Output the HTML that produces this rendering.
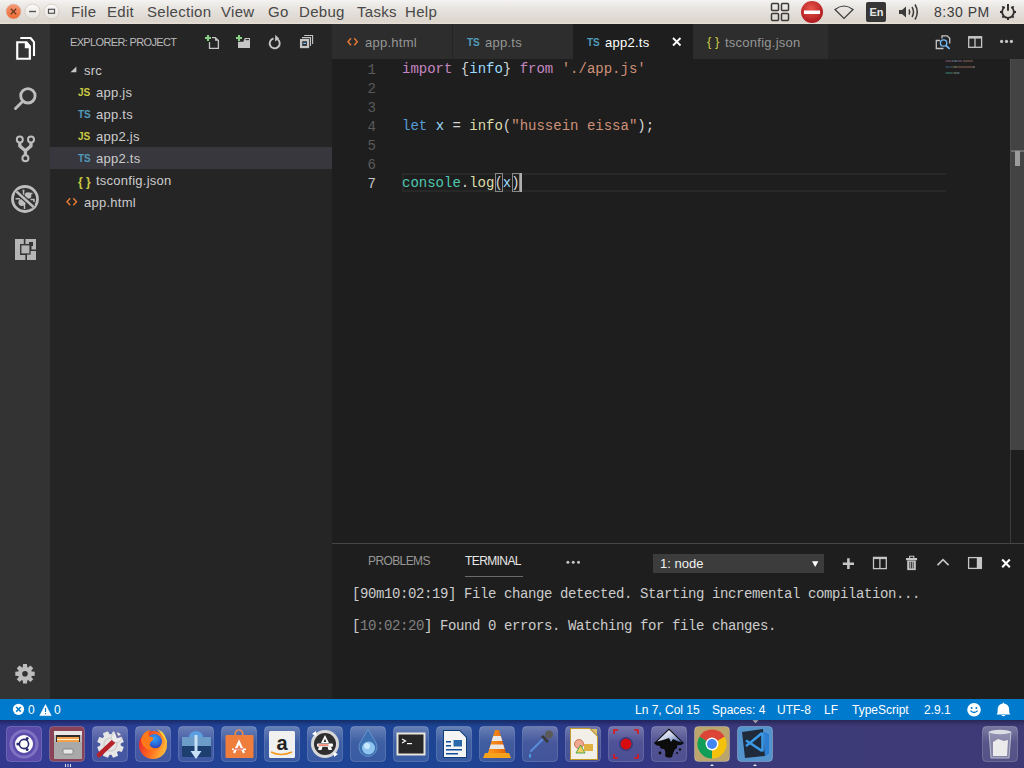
<!DOCTYPE html>
<html><head><meta charset="utf-8">
<style>
*{margin:0;padding:0;box-sizing:border-box}
html,body{width:1024px;height:768px;overflow:hidden;background:#1e1e1e;font-family:"Liberation Sans",sans-serif}
.abs{position:absolute}
#topbar{position:absolute;left:0;top:0;width:1024px;height:24px;background:linear-gradient(#f4f3f1 0px,#e6e2dd 10px,#dbd5cd 22px,#e6ded4 23px)}
.menu{position:absolute;top:3px;font-size:15px;letter-spacing:0.3px;color:#484848;white-space:nowrap}
#activity{position:absolute;left:0;top:24px;width:50px;height:675px;background:#333333}
#sidebar{position:absolute;left:50px;top:24px;width:282px;height:675px;background:#252526}
#tabs{position:absolute;left:332px;top:24px;width:692px;height:35px;background:#252526}
.tab{position:absolute;top:0;height:35px;background:#2d2d2d;font-size:13px;color:#8e8e8e}
#editor{position:absolute;left:332px;top:59px;width:692px;height:484px;background:#1e1e1e}
#panel{position:absolute;left:332px;top:543px;width:692px;height:156px;background:#1e1e1e;border-top:1px solid #454545}
#status{position:absolute;left:0;top:699px;width:1024px;height:21px;background:#007acc;color:#fff;font-size:12px}
#dock{position:absolute;left:0;top:720px;width:1024px;height:48px;background:#3a3770}
.mono{font-family:"Liberation Mono",monospace}
.row{position:absolute;left:0;width:282px;height:22px}
.row.sel{background:#37373d}
.fname{position:absolute;top:4px;font-size:13px;letter-spacing:0.25px;color:#cccccc;white-space:nowrap}
.ico{position:absolute;top:6px;font-size:10px;font-weight:bold;white-space:nowrap}
.js{color:#cbcb41}.ts{color:#519aba}.br{color:#cbcb41;font-weight:bold;font-size:12px;letter-spacing:0}
.tab.act{background:#1e1e1e}
.tlabel{position:absolute;top:11px;font-size:13px;letter-spacing:0.25px;color:#969696;white-space:nowrap}
.act .tlabel{color:#ffffff}
.tico{position:absolute;top:13px;font-size:10px;font-weight:bold;white-space:nowrap}
.lnums{position:absolute;left:0;top:2px;width:44px;text-align:right;font-size:14px;line-height:19px;color:#5a5a5a}
.code{position:absolute;left:70px;top:1px;font-size:14px;line-height:19px;color:#d4d4d4;white-space:pre}
.kw{color:#c586c0}.vr{color:#9cdcfe}.st{color:#ce9178}.ty{color:#569cd6}.fn{color:#dcdcaa}.cl{color:#4ec9b0}
.ptab{position:absolute;top:10px;font-size:12px;letter-spacing:-0.6px;white-space:nowrap}
.term{position:absolute;left:20px;font-size:14px;letter-spacing:-0.4px;line-height:16px;color:#cccccc;white-space:pre}
.sb{position:absolute;top:4px;font-size:12px;color:#ffffff;white-space:nowrap}
</style></head><body>
<div id="topbar">
  <svg class="abs" style="left:0;top:0" width="64" height="24">
    <defs>
      <linearGradient id="cg" x1="0" y1="0" x2="0" y2="1"><stop offset="0" stop-color="#f49a78"/><stop offset="1" stop-color="#ee6a33"/></linearGradient>
      <linearGradient id="wg" x1="0" y1="0" x2="0" y2="1"><stop offset="0" stop-color="#fbfaf9"/><stop offset="1" stop-color="#e6e3de"/></linearGradient>
    </defs>
    <circle cx="13.5" cy="11.5" r="7.5" fill="url(#cg)" stroke="#d9c3b5" stroke-width="0.6"/>
    <path d="M10.8 8.8 L16.2 14.2 M16.2 8.8 L10.8 14.2" stroke="#6b3a22" stroke-width="1.3"/>
    <circle cx="32.5" cy="11.5" r="7.5" fill="url(#wg)" stroke="#cfc6bb" stroke-width="0.8"/>
    <path d="M29 11.5 H36" stroke="#555" stroke-width="1.4"/>
    <circle cx="51.5" cy="11.5" r="7.5" fill="url(#wg)" stroke="#cfc6bb" stroke-width="0.8"/>
    <rect x="48.5" y="9.3" width="6" height="4" fill="none" stroke="#555" stroke-width="1.2"/>
  </svg>
  <span class="menu" style="left:71px">File</span>
  <span class="menu" style="left:107px">Edit</span>
  <span class="menu" style="left:147px">Selection</span>
  <span class="menu" style="left:221px">View</span>
  <span class="menu" style="left:268px">Go</span>
  <span class="menu" style="left:299px">Debug</span>
  <span class="menu" style="left:357px">Tasks</span>
  <span class="menu" style="left:405px">Help</span>
  <svg class="abs" style="left:764px;top:0" width="260" height="24">
    <g fill="none" stroke="#3c3c3c" stroke-width="1.5">
      <rect x="7.5" y="3.5" width="7" height="7" rx="1"/><rect x="17.5" y="3.5" width="7" height="7" rx="1"/>
      <rect x="7.5" y="13.5" width="7" height="7" rx="1"/><rect x="17.5" y="13.5" width="7" height="7" rx="1"/>
    </g>
    <defs><radialGradient id="rg" cx="0.45" cy="0.35" r="0.7"><stop offset="0" stop-color="#e8564a"/><stop offset="1" stop-color="#a8141a"/></radialGradient></defs>
    <circle cx="48" cy="12" r="11" fill="url(#rg)"/>
    <rect x="40" y="10.5" width="16" height="3.5" fill="#fff"/>
    <path d="M71 9.5 Q80 2.5 89 9.5 L80 18.5 Z" fill="none" stroke="#3a3a3a" stroke-width="1.2"/>
    <rect x="102" y="2" width="20" height="20" rx="2" fill="#363636"/>
    <text x="105.5" y="15.8" font-family="Liberation Sans" font-weight="bold" font-size="11" fill="#e6e6e6">En</text>
    <path d="M135 10 H138 L142 6.5 V17.5 L138 14 H135 Z" fill="#3a3a3a"/>
    <path d="M145 9.5 Q146.5 12 145 14.5 M148 7 Q151 12 148 17 M151 4.5 Q155.5 12 151 19.5" fill="none" stroke="#3a3a3a" stroke-width="1.5"/>
  </svg>
  <span class="menu" style="left:934px;font-size:14px;top:4px;letter-spacing:0.5px;color:#3c3c3c">8:30 PM</span>
  <svg class="abs" style="left:996px;top:0" width="28" height="24">
    <path d="M8.70 7.10 A5.9 5.9 0 1 0 15.30 7.10" fill="none" stroke="#2e2e2e" stroke-width="1.8"/>
    <path d="M17.50 12.00 L20.00 12.00 M15.89 15.89 L17.66 17.66 M12.00 17.50 L12.00 20.00 M8.11 15.89 L6.34 17.66 M6.50 12.00 L4.00 12.00 M8.11 8.11 L6.34 6.34 M15.89 8.11 L17.66 6.34" stroke="#2e2e2e" stroke-width="1.9"/>
    <path d="M12 4 V10.7" stroke="#2e2e2e" stroke-width="1.9"/>
  </svg>
</div>
<div id="activity">
<svg class="abs" style="left:0;top:-24px" width="50" height="700">
  <path d="M20.3 38 H30.6 L34 42.2 V56" fill="none" stroke="#ffffff" stroke-width="2.1" stroke-linejoin="round"/>
  <path d="M15.6 40.6 H27.2 L31.5 45.6 V60.4 H15.6 Z" fill="#ffffff" stroke="#333333" stroke-width="1.1" stroke-linejoin="round"/>
  <path d="M18.3 43.3 H24.8 V48.3 H28.7 V57.7 H18.3 Z" fill="#333333"/>
  <g fill="none" stroke="#bdbdbd" stroke-width="2.9" stroke-linecap="round">
    <circle cx="27.9" cy="95.8" r="7.2"/>
    <path d="M15.5 108.5 L22.3 101.7"/>
  </g>
  <g fill="none" stroke="#bdbdbd" stroke-width="2">
    <circle cx="19.8" cy="139.5" r="3"/>
    <circle cx="31" cy="139.5" r="3"/>
    <circle cx="25.4" cy="158.2" r="3"/>
  </g>
  <path d="M19.8 142.5 V146 L25.4 150.8 L31 146 V142.5 M25.4 150.8 V155.2" fill="none" stroke="#bdbdbd" stroke-width="3.3" stroke-linejoin="round"/>
  <circle cx="25" cy="199" r="12.5" stroke-width="2.8" fill="none" stroke="#bdbdbd"/>
  <g fill="#bdbdbd">
    <ellipse cx="22" cy="202.5" rx="3.6" ry="3.4"/>
    <ellipse cx="28" cy="195.5" rx="3.4" ry="3.2"/>
  </g>
  <g fill="none" stroke="#bdbdbd" stroke-width="1.5">
    <path d="M15.5 198.8 H20 M24.5 202 V209 M23.5 190 V195 M22.5 190.5 H24.5 M29.5 193.5 L32.5 193.5 M30.5 199.5 H34 V202"/>
  </g>
  <path d="M16.4 191.5 L33.6 207" stroke="#333" stroke-width="5"/>
  <path d="M16.4 191.5 L33.6 207" stroke="#bdbdbd" stroke-width="2.4"/>
  <g fill="#b5b5b5">
    <path d="M15 239 H23.8 V244 H20 V255 H25.4 V260 H15 Z"/>
    <path d="M25.4 239 H36 V249.5 H31.5 V246 H33 V242 H29 V244 H25.4 Z"/>
    <rect x="27" y="251" width="9" height="9"/>
  </g>
  <rect x="20.8" y="244.8" width="9.2" height="9.2" fill="#b5b5b5" stroke="#333" stroke-width="1.2"/>
  <path d="M31.63 671.54 L34.70 671.81 L34.70 675.79 L31.63 676.06 L31.28 676.89 L33.26 679.25 L30.45 682.06 L28.09 680.08 L27.26 680.43 L26.99 683.50 L23.01 683.50 L22.74 680.43 L21.91 680.08 L19.55 682.06 L16.74 679.25 L18.72 676.89 L18.37 676.06 L15.30 675.79 L15.30 671.81 L18.37 671.54 L18.72 670.71 L16.74 668.35 L19.55 665.54 L21.91 667.52 L22.74 667.17 L23.01 664.10 L26.99 664.10 L27.26 667.17 L28.09 667.52 L30.45 665.54 L33.26 668.35 L31.28 670.71 Z M27.80 673.80 a2.8 2.8 0 1 0 -5.6 0 a2.8 2.8 0 1 0 5.6 0 Z" fill="#bdbdbd" fill-rule="evenodd"/>
</svg>
</div>
<div id="sidebar">
  <div class="abs" style="left:20px;top:12px;font-size:11px;letter-spacing:-0.65px;color:#bbbbbb;white-space:nowrap" id="exphdr">EXPLORER: PROJECT</div>
  <svg class="abs" style="left:0;top:0" width="282" height="35">
    <g transform="translate(-50,-24)">
      <path d="M209.5 42 V48.3 H218.4 V40.6 L215.3 37.6 H212" fill="none" stroke="#c5c5c5" stroke-width="1.3"/>
      <path d="M215 37.6 V40.8 H218.6 Z" fill="#c5c5c5"/>
      <path d="M205 38 H211 M208 35 V41" stroke="#89d185" stroke-width="2.1"/>
      <path d="M238 41.8 H243.3 L244.8 37.9 H250 V48 H238 Z" fill="#c5c5c5"/>
      <path d="M245.6 39.6 H249" stroke="#252526" stroke-width="1.1"/>
      <path d="M236 38 H242 M239 35 V41" stroke="#89d185" stroke-width="2.1"/>
      <path d="M277.5 39.2 A5 5 0 1 1 273.5 38.5" fill="none" stroke="#c5c5c5" stroke-width="1.9"/>
      <path d="M275.3 34.8 L279.2 38.6 L275 41.6 Z" fill="#c5c5c5"/>
      <rect x="301.1" y="40.1" width="6.9" height="6.9" fill="none" stroke="#c5c5c5" stroke-width="2.3"/>
      <path d="M303.2 43.4 H306" stroke="#75beff" stroke-width="1.3"/>
      <path d="M302 37.6 H310.5 V46" fill="none" stroke="#c5c5c5" stroke-width="1.1"/>
      <path d="M304.2 35.5 H312.6 V43.9" fill="none" stroke="#c5c5c5" stroke-width="1.1"/>
    </g>
  </svg>
  <div class="row" style="top:35px"><svg class="abs" style="left:20px;top:7px" width="8" height="8"><path d="M6.4 0.4 V6.3 H0.5 Z" fill="#c5c5c5"/></svg><span class="fname" style="left:34px">src</span></div>
  <div class="row" style="top:57px"><span class="ico js" style="left:28px">JS</span><span class="fname" style="left:46px">app.js</span></div>
  <div class="row" style="top:79px"><span class="ico ts" style="left:28px">TS</span><span class="fname" style="left:46px">app.ts</span></div>
  <div class="row" style="top:101px"><span class="ico js" style="left:28px">JS</span><span class="fname" style="left:46px">app2.js</span></div>
  <div class="row sel" style="top:123px"><span class="ico ts" style="left:28px">TS</span><span class="fname" style="left:46px">app2.ts</span></div>
  <div class="row" style="top:145px"><span class="ico br" style="left:28px">{ }</span><span class="fname" style="left:46px">tsconfig.json</span></div>
  <div class="row" style="top:167px"><svg class="abs" style="left:16px;top:6px" width="12" height="10"><path d="M4.2 1.2 L1 4.7 L4.2 8.2 M7.3 1.2 L10.5 4.7 L7.3 8.2" fill="none" stroke="#e37933" stroke-width="1.5"/></svg><span class="fname" style="left:34px">app.html</span></div>
</div>
<div id="tabs">
  <div class="tab" style="left:0;width:120px"><svg class="abs" style="left:15px;top:13px" width="12" height="10"><path d="M4 1.2 L1 4.7 L4 8.2 M7.3 1.2 L10.3 4.7 L7.3 8.2" fill="none" stroke="#e37933" stroke-width="1.5"/></svg><span class="tlabel" style="left:33px">app.html</span></div>
  <div class="tab" style="left:121px;width:120px"><span class="tico ts" style="left:14px">TS</span><span class="tlabel" style="left:32px">app.ts</span></div>
  <div class="tab act" style="left:241px;width:120px"><span class="tico ts" style="left:14px">TS</span><span class="tlabel" style="left:32px">app2.ts</span>
    <svg class="abs" style="left:99px;top:13px" width="10" height="10"><path d="M1 1 L8.5 8.5 M8.5 1 L1 8.5" stroke="#ffffff" stroke-width="1.8"/></svg></div>
  <div class="tab" style="left:361px;width:135px"><span class="tico br" style="left:14px;top:10px;font-size:13px;font-weight:normal">{ }</span><span class="tlabel" style="left:32px">tsconfig.json</span></div>
  <svg class="abs" style="left:0;top:0" width="692" height="35">
    <g transform="translate(-332,-24)">
      <path d="M942 38.5 V35.8 H947.2 L949.7 38.3 V43.6" fill="none" stroke="#c5c5c5" stroke-width="1.3"/>
      <path d="M940 40.5 H936.3 V48.5 H943.5" fill="none" stroke="#c5c5c5" stroke-width="1.3"/>
      <circle cx="943.6" cy="43" r="3.2" fill="none" stroke="#75beff" stroke-width="1.3"/>
      <path d="M945.8 45.3 L949.6 48.9" stroke="#75beff" stroke-width="1.6"/>
      <rect x="968.7" y="36.7" width="12.9" height="10.6" fill="none" stroke="#c5c5c5" stroke-width="1.3"/>
      <path d="M968.7 37.8 H981.6" stroke="#c5c5c5" stroke-width="1.6"/>
      <path d="M975 37 V47.3" stroke="#c5c5c5" stroke-width="1.3"/>
      <circle cx="1001.6" cy="41.4" r="1.6" fill="#c5c5c5"/><circle cx="1006.5" cy="41.4" r="1.6" fill="#c5c5c5"/><circle cx="1011.4" cy="41.4" r="1.6" fill="#c5c5c5"/>
    </g>
  </svg>
</div>
<div id="editor">
  <div class="abs" style="left:70px;top:114px;width:544px;height:19px;border:2px solid #282828;border-right:none"></div>
  <div class="abs" style="left:163px;top:114.4px;width:8.4px;height:18.4px;border:1px solid #888888"></div>
  <div class="abs" style="left:180px;top:114.4px;width:8.4px;height:18.4px;border:1px solid #888888"></div>
  <div class="abs" style="left:187.5px;top:114px;width:2px;height:19px;background:#aeafad"></div>
  <div class="lnums mono">
    <div>1</div><div>2</div><div>3</div><div>4</div><div>5</div><div>6</div><div style="color:#c6c6c6">7</div>
  </div>
  <div class="code mono"><div><span class="kw">import</span> {<span class="vr">info</span>} <span class="kw">from</span> <span class="st">'./app.js'</span></div><div>&nbsp;</div><div>&nbsp;</div><div><span class="ty">let</span> <span class="vr">x</span> = <span class="fn">info</span>(<span class="st">"hussein eissa"</span>);</div><div>&nbsp;</div><div>&nbsp;</div><div><span class="cl">console</span>.<span class="fn">log</span>(<span class="vr">x</span>)</div></div>
  <svg class="abs" style="left:0;top:0" width="692" height="484">
    <g transform="translate(-332,-59)">
      <rect x="1010" y="59" width="1" height="484" fill="#3c3c3c"/><rect x="1010" y="59" width="1" height="391" fill="#4c4c4c"/>
      <rect x="1011" y="59" width="13" height="391" fill="#434343"/>
      <rect x="1011" y="150.5" width="13" height="1" fill="#9a9a9a"/>
      <rect x="1015" y="151" width="5" height="15" fill="#9b9b9b"/>
    </g>
  </svg>
  <svg class="abs" style="left:613px;top:0" width="64" height="20">
    <g transform="translate(-945,-59)" opacity="0.3">
      <rect x="945.6" y="60" width="6" height="2" fill="#c586c0"/>
      <rect x="952" y="60" width="1" height="2" fill="#d4d4d4"/>
      <rect x="953.5" y="60" width="4" height="2" fill="#9cdcfe"/>
      <rect x="958" y="60" width="4" height="2" fill="#c586c0"/>
      <rect x="963" y="60" width="10" height="2" fill="#ce9178"/>
      <rect x="945.6" y="66" width="3" height="2" fill="#569cd6"/>
      <rect x="949.5" y="66" width="1" height="2" fill="#9cdcfe"/>
      <rect x="951.5" y="66" width="1" height="2" fill="#d4d4d4"/>
      <rect x="953.5" y="66" width="4" height="2" fill="#dcdcaa"/>
      <rect x="958" y="66" width="15" height="2" fill="#ce9178"/>
      <rect x="973" y="66" width="2" height="2" fill="#d4d4d4"/>
      <rect x="945.6" y="72" width="7" height="2" fill="#4ec9b0"/>
      <rect x="953.5" y="72" width="3" height="2" fill="#dcdcaa"/>
      <rect x="956.5" y="72" width="3" height="2" fill="#9cdcfe"/>
    </g>
  </svg>
</div>
<div id="panel">
  <span class="ptab" style="left:36px;color:#969696">PROBLEMS</span>
  <span class="ptab" style="left:133px;color:#e7e7e7">TERMINAL</span>
  <div class="abs" style="left:133px;top:32px;width:58px;height:1px;background:#6b6b6b"></div>
  <div class="abs" style="left:321px;top:10px;width:171px;height:19px;background:#3c3c3c"></div>
  <span class="abs" style="left:328px;top:12px;font-size:13px;color:#f0f0f0;white-space:nowrap">1: node</span>
  <svg class="abs" style="left:0;top:0" width="692" height="40">
    <g transform="translate(-332,-543)">
      <circle cx="567.9" cy="561.3" r="1.5" fill="#c5c5c5"/><circle cx="573.2" cy="561.3" r="1.5" fill="#c5c5c5"/><circle cx="578.5" cy="561.3" r="1.5" fill="#c5c5c5"/>
      <path d="M812 560.2 H818.4 L815.2 566 Z" fill="#ffffff"/>
      <path d="M842.8 562.7 H854 M848.4 557.2 V568" stroke="#c5c5c5" stroke-width="2.6"/>
      <rect x="873.5" y="556.4" width="12.8" height="11.2" fill="none" stroke="#c5c5c5" stroke-width="1.3"/>
      <path d="M873.5 557.3 H886.3" stroke="#c5c5c5" stroke-width="1.6"/>
      <path d="M879.9 556.5 V567.6" stroke="#c5c5c5" stroke-width="1.3"/>
      <path d="M909.6 557 V555.3 H913.8 V557" fill="none" stroke="#c5c5c5" stroke-width="1.1"/>
      <rect x="906" y="557" width="11.1" height="2.2" fill="#c5c5c5"/>
      <rect x="907.2" y="559.5" width="8.6" height="9.6" fill="#c5c5c5"/>
      <path d="M909.8 560.8 V567.5 M911.5 560.8 V567.5 M913.2 560.8 V567.5" stroke="#1e1e1e" stroke-width="0.8"/>
      <path d="M937.5 564.2 L943 558.7 L948.6 564.2" fill="none" stroke="#c5c5c5" stroke-width="1.7"/>
      <rect x="968.6" y="556.6" width="12.8" height="10.8" fill="none" stroke="#c5c5c5" stroke-width="1.3"/>
      <rect x="976.8" y="556.6" width="4.6" height="10.8" fill="#c5c5c5"/>
      <path d="M1002.2 558.6 L1009.8 566.2 M1009.8 558.6 L1002.2 566.2" stroke="#ffffff" stroke-width="2.1"/>
    </g>
  </svg>
  <div class="term mono" style="top:42px"><span>[90m10:02:19] File change detected. Starting incremental compilation...</span></div>
  <div class="term mono" style="top:74px"><span>[<span style="color:#808080">10:02:20</span>] Found 0 errors. Watching for file changes.</span></div>
</div>
<div id="status">
  <svg class="abs" style="left:0;top:0" width="70" height="21">
    <circle cx="18.5" cy="10.3" r="5.6" fill="#ffffff"/>
    <path d="M16.2 8 L20.8 12.6 M20.8 8 L16.2 12.6" stroke="#007acc" stroke-width="1.5"/>
    <path d="M45.5 5.6 L51.2 16.6 H39.8 Z" fill="#ffffff" stroke="#ffffff" stroke-width="0.6" stroke-linejoin="round"/>
    <path d="M45.5 9 V13" stroke="#007acc" stroke-width="1.2"/>
    <circle cx="45.5" cy="14.6" r="0.7" fill="#007acc"/>
  </svg>
  <span class="sb" style="left:28px">0</span>
  <span class="sb" style="left:54px">0</span>
  <span class="sb" style="left:635px">Ln 7, Col 15</span>
  <span class="sb" style="left:712px">Spaces: 4</span>
  <span class="sb" style="left:777px">UTF-8</span>
  <span class="sb" style="left:824px">LF</span>
  <span class="sb" style="left:852px">TypeScript</span>
  <span class="sb" style="left:924px">2.9.1</span>
  <svg class="abs" style="left:960px;top:0" width="64" height="21">
    <circle cx="14" cy="10.8" r="6.8" fill="#ffffff"/>
    <circle cx="11.6" cy="8.9" r="1" fill="#007acc"/><circle cx="16.4" cy="8.9" r="1" fill="#007acc"/>
    <path d="M10.4 11.6 Q14 15.4 17.6 11.6" fill="none" stroke="#007acc" stroke-width="1.3"/>
    <path d="M42.8 4.6 Q42.8 3.4 43.4 3.4 Q44 3.4 44 4.6 Q49.2 5.6 49.2 11 V13.6 L50.2 15.4 H36.6 L37.6 13.6 V11 Q37.6 5.6 42.8 4.6 Z" fill="#ffffff"/>
    <path d="M41.3 16 Q43.4 18.6 45.5 16 Z" fill="#ffffff"/>
  </svg>
</div>
<div id="dock"><svg class="abs" style="left:0;top:0" width="1024" height="48"><defs>
 <linearGradient id="dockbg" x1="0" y1="0" x2="1" y2="0"><stop offset="0" stop-color="#32388e"/><stop offset="0.12" stop-color="#2a3e94"/><stop offset="0.25" stop-color="#1f4496"/><stop offset="0.45" stop-color="#1d4594"/><stop offset="0.6" stop-color="#323686"/><stop offset="0.75" stop-color="#3c3a78"/><stop offset="1" stop-color="#3d3a76"/></linearGradient>
 <linearGradient id="docktop" x1="0" y1="0" x2="0" y2="1"><stop offset="0" stop-color="rgba(0,0,20,0.35)"/><stop offset="1" stop-color="rgba(0,0,20,0)"/></linearGradient>
 <linearGradient id="tg" x1="0" y1="0" x2="0" y2="1"><stop offset="0" stop-color="rgba(255,255,255,0.32)"/><stop offset="0.45" stop-color="rgba(255,255,255,0.14)"/><stop offset="1" stop-color="rgba(255,255,255,0.12)"/></linearGradient>
 <linearGradient id="tgb" x1="0" y1="0" x2="0" y2="1"><stop offset="0" stop-color="rgba(255,255,255,0.32)"/><stop offset="0.45" stop-color="rgba(255,255,255,0.14)"/><stop offset="1" stop-color="rgba(255,255,255,0.12)"/></linearGradient>
 <radialGradient id="ffg" cx="0.5" cy="0.3" r="0.7"><stop offset="0" stop-color="#36a0f0"/><stop offset="0.6" stop-color="#2a6ad8"/><stop offset="1" stop-color="#3a3aa8"/></radialGradient>
 <linearGradient id="fox" x1="0" y1="0.3" x2="1" y2="0.7"><stop offset="0" stop-color="#e8262e"/><stop offset="0.5" stop-color="#ff6a1e"/><stop offset="1" stop-color="#ffc23b"/></linearGradient>
 <linearGradient id="coneg" x1="0" y1="0" x2="1" y2="0"><stop offset="0" stop-color="#ff9a1e"/><stop offset="1" stop-color="#e2650a"/></linearGradient>
</defs>
<rect x="0" y="0" width="1024" height="48" fill="url(#dockbg)"/><rect x="0" y="0" width="1024" height="6" fill="url(#docktop)"/>
<rect x="6.5" y="6.5" width="35" height="35" rx="4" fill="#5a4aaa" stroke="rgba(255,255,255,0.2)"/>
<circle cx="24" cy="24" r="13" fill="none" stroke="rgba(200,190,240,0.35)" stroke-width="3"/>
<circle cx="24" cy="24" r="9" fill="#ffffff"/>
<circle cx="24" cy="24" r="4.6" fill="none" stroke="#2a2a6e" stroke-width="1.6"/>
<circle cx="17.8" cy="24" r="1.5" fill="#2a2a6e"/><circle cx="27.1" cy="18.6" r="1.5" fill="#2a2a6e"/><circle cx="27.1" cy="29.4" r="1.5" fill="#2a2a6e"/>
<rect x="49.5" y="6.5" width="35" height="35" rx="4" fill="#8a4256" stroke="rgba(255,255,255,0.2)"/>
<rect x="54" y="11" width="28" height="28" rx="1.5" fill="#b9b9b9"/>
<rect x="54" y="11" width="28" height="4" fill="#e6e6e6"/>
<rect x="56" y="15" width="24" height="7" fill="#2a2a2a"/>
<rect x="57" y="17" width="22" height="5" fill="#f2a04a"/><rect x="57" y="19" width="22" height="1" fill="#fff4d0"/>
<rect x="54" y="22" width="28" height="17" fill="#a9a9a9"/>
<rect x="63" y="29" width="10" height="5" rx="1" fill="#e8e8e8" stroke="#777" stroke-width="0.8"/>
<rect x="65" y="44" width="1" height="3" fill="#e0e0e0"/><rect x="67.5" y="44" width="1" height="3" fill="#e0e0e0"/><rect x="70" y="44" width="1" height="3" fill="#e0e0e0"/>
<rect x="92.5" y="6.5" width="35" height="35" rx="4" fill="url(#tg)" stroke="rgba(255,255,255,0.18)" stroke-width="1"/>
<path d="M120.7 25.4 L123.8 27.1 L121.8 32.1 L118.3 31.0 L117.0 32.3 L118.1 35.8 L113.1 37.8 L111.4 34.7 L109.6 34.7 L107.9 37.8 L102.9 35.8 L104.0 32.3 L102.7 31.0 L99.2 32.1 L97.2 27.1 L100.3 25.4 L100.3 23.6 L97.2 21.9 L99.2 16.9 L102.7 18.0 L104.0 16.7 L102.9 13.2 L107.9 11.2 L109.6 14.3 L111.4 14.3 L113.1 11.2 L118.1 13.2 L117.0 16.7 L118.3 18.0 L121.8 16.9 L123.8 21.9 L120.7 23.6 Z" fill="#e6e6e6"/><circle cx="110.5" cy="24.5" r="6.5" fill="none" stroke="#cfcfcf" stroke-width="1.5"/><path d="M99 35.0 L113 22.0" stroke="#b8222a" stroke-width="4.6" stroke-linecap="round"/><circle cx="116.5" cy="17.5" r="5" fill="#ececec" stroke="#bdbdbd" stroke-width="0.6"/><path d="M115.5 11.5 L117.5 17.0 L122.5 15.5" fill="none" stroke="#6a6aa8" stroke-width="2"/><rect x="135.5" y="6.5" width="35" height="35" rx="4" fill="url(#tg)" stroke="rgba(255,255,255,0.18)" stroke-width="1"/>
<circle cx="153" cy="25" r="14" fill="url(#fox)"/><circle cx="154.5" cy="21.5" r="7.5" fill="url(#ffg)"/><path d="M141 20 Q143 11 150 10 Q147 14 150 17 Q154 16 153 20 Q149 22 150 26 Q154 30 160 27 Q155 33 147 29 Q141 25 141 20 Z" fill="#ff7a1a"/><path d="M157 9 Q167 13 167 25 Q165 17 157 9 Z" fill="#ffd63b"/><rect x="178.5" y="6.5" width="35" height="35" rx="4" fill="url(#tg)" stroke="rgba(255,255,255,0.18)" stroke-width="1"/>
<ellipse cx="196" cy="17" rx="7" ry="6" fill="#5aa0e0"/>
<rect x="182" y="17" width="29" height="9" fill="#6c9cc8"/>
<rect x="182" y="26" width="29" height="11" fill="#1d3f70"/>
<path d="M194.5 15 H197.5 V31 L201.5 31 L196 39 L190.5 31 H194.5 Z" fill="#c8e0f6"/>
<rect x="221.5" y="6.5" width="35" height="35" rx="4" fill="url(#tgb)" stroke="rgba(255,255,255,0.18)" stroke-width="1"/>
<path d="M235 16 Q235 10 239 10 Q243 10 243 16" fill="none" stroke="#f08a4a" stroke-width="1.6"/>
<rect x="225.5" y="15" width="28" height="23" rx="1" fill="#ef7d3c"/>
<path d="M234 33 L239 22 L244 33" fill="none" stroke="#ffffff" stroke-width="2.2"/>
<rect x="232" y="28.5" width="14" height="1.6" fill="#ffffff"/><rect x="234" y="28.5" width="9" height="1" fill="#e03020"/>
<rect x="264.5" y="6.5" width="35" height="35" rx="4" fill="url(#tgb)" stroke="rgba(255,255,255,0.18)" stroke-width="1"/>
<rect x="269" y="11" width="26" height="27" rx="1.5" fill="#f0f0f0"/>
<text x="282" y="30" text-anchor="middle" font-family="Liberation Sans" font-weight="bold" font-size="20" fill="#222">a</text>
<path d="M271 32 Q281 37 292 32" fill="none" stroke="#f29b1d" stroke-width="1.6"/>
<rect x="307.5" y="6.5" width="35" height="35" rx="4" fill="url(#tgb)" stroke="rgba(255,255,255,0.18)" stroke-width="1"/>
<circle cx="325" cy="24" r="14" fill="#d8d8d8"/>
<circle cx="325" cy="24" r="11" fill="#2e2e2e"/>
<g transform="translate(0,2.5)"><path d="M325 12.5 L321 20.5 H329 Z" fill="#ffffff"/><path d="M325 16 L323.6 19.5 H326.4 Z" fill="#2e2e2e"/><rect x="317" y="21" width="16" height="3.2" rx="1" fill="#ffffff"/><rect x="318.5" y="22" width="10" height="1.1" fill="#e84020"/><path d="M319 24 H322.5 L321.5 27.5 H318 Z M327.5 24 H331 L332 27.5 H328.5 Z" fill="#ffffff"/></g><path d="M312 14 L316 11 L316.5 16 Z M338 34 L334 37 L333.5 32 Z" fill="#ffffff"/><rect x="350.5" y="6.5" width="35" height="35" rx="4" fill="url(#tgb)" stroke="rgba(255,255,255,0.18)" stroke-width="1"/>
<path d="M368 9 Q371 15 375 21 Q379 27 375 33 Q368 40 361 33 Q357 27 361 21 Q365 15 368 9 Z" fill="#3d70b0" stroke="#6e9ad0" stroke-width="0.8"/>
<ellipse cx="368.5" cy="28" rx="6.5" ry="6.5" fill="#8ec4ee"/>
<ellipse cx="367" cy="26" rx="3" ry="3" fill="#c8e8ff"/>
<rect x="393.5" y="6.5" width="35" height="35" rx="4" fill="url(#tgb)" stroke="rgba(255,255,255,0.18)" stroke-width="1"/>
<rect x="396.5" y="12.5" width="29" height="23" fill="#e8e4dc"/>
<rect x="398.5" y="14.5" width="25" height="19" fill="#262626"/>
<path d="M402 19 L405.5 21 L402 23" fill="none" stroke="#ffffff" stroke-width="1.2"/><rect x="407" y="23" width="5" height="1.2" fill="#fff"/>
<rect x="436.5" y="6.5" width="35" height="35" rx="4" fill="url(#tgb)" stroke="rgba(255,255,255,0.18)" stroke-width="1"/>
<path d="M443 10 H460 L467 17 V38 H443 Z" fill="#0f3f7a"/>
<path d="M444 11 H459.5 L466 17.5 V37 H444 Z" fill="#f4f4f4"/>
<rect x="446" y="21" width="5" height="1.5" fill="#0f4f9a"/><rect x="446" y="25" width="5" height="1.5" fill="#0f4f9a"/><rect x="446" y="29" width="16" height="1.5" fill="#0f4f9a"/><rect x="446" y="33" width="12" height="1.5" fill="#0f4f9a"/>
<rect x="453.5" y="20" width="8.5" height="6.5" fill="#2a6aaa"/>
<rect x="479.5" y="6.5" width="35" height="35" rx="4" fill="url(#tg)" stroke="rgba(255,255,255,0.18)" stroke-width="1"/>
<path d="M495 10 H499 L506 33 H488 Z" fill="url(#coneg)"/>
<path d="M493.2 16 H500.8 L502.4 21 H491.6 Z" fill="#e8e8e8"/>
<path d="M490.8 24.5 H503.2 L504.6 29 H489.4 Z" fill="#e8e8e8"/>
<path d="M485 33 H509 L511 38 H483 Z" fill="#f7a21b"/>
<rect x="522.5" y="6.5" width="35" height="35" rx="4" fill="url(#tg)" stroke="rgba(255,255,255,0.18)" stroke-width="1"/>
<path d="M531 31 L544 18" stroke="#5a8ad8" stroke-width="2.2" stroke-linecap="round"/>
<path d="M542 16 L548 22" stroke="#3a3a3a" stroke-width="3"/>
<circle cx="549" cy="14.5" r="4" fill="#5a5a5a"/>
<path d="M530 33 Q528 37 530 38 Q532 37 530 33 Z" fill="#4aa8f0"/>
<rect x="565.5" y="6.5" width="35" height="35" rx="4" fill="url(#tg)" stroke="rgba(255,255,255,0.18)" stroke-width="1"/>
<path d="M570 8 H590 L598 16 V40 H570 Z" fill="#c49a28"/>
<path d="M571 9 H589.5 L597 16.5 V39 H571 Z" fill="#f2efe8"/>
<path d="M591 9 H597 V15 Z" fill="#e0c060"/>
<circle cx="579" cy="24" r="4.5" fill="#f0a890" stroke="#c06040" stroke-width="0.8"/>
<path d="M576 33 L580.5 25 L585 33 Z" fill="#f0d060" stroke="#2a9a3a" stroke-width="0.8"/>
<rect x="584" y="24" width="9" height="7" fill="#e0b040"/>
<rect x="608.5" y="6.5" width="35" height="35" rx="4" fill="url(#tg)" stroke="rgba(255,255,255,0.18)" stroke-width="1"/>
<path d="M614 14 V10 H618 M634 10 H638 V14 M638 34 V38 H634 M618 38 H614 V34" fill="none" stroke="#e0141a" stroke-width="1.6"/>
<circle cx="626" cy="24" r="7" fill="#3c3c7a"/><circle cx="626" cy="24" r="5.4" fill="#d80c10"/>
<rect x="651.5" y="6.5" width="35" height="35" rx="4" fill="url(#tg)" stroke="rgba(255,255,255,0.18)" stroke-width="1"/>
<defs><linearGradient id="inkg" x1="0" y1="0" x2="1" y2="1"><stop offset="0" stop-color="#ffffff"/><stop offset="0.5" stop-color="#c8d0e8"/><stop offset="1" stop-color="#3a5aa0"/></linearGradient></defs><path d="M669 8.5 L684 23 Q681 26 677 25 Q678 29 675 29 Q673 33 672 37 Q668 39 665 36 Q666 31 664 29 Q659 29 660 26 Q656 26 654 23 Z" fill="#0c0c0c"/><path d="M669 10 L682 22.5 Q677 21 673 19 L671 22 L669 18 Q663 20 657 21.5 Z" fill="url(#inkg)"/><circle cx="660" cy="33" r="1.4" fill="#0c0c0c"/><circle cx="680" cy="29.5" r="1.2" fill="#0c0c0c"/><circle cx="677" cy="33" r="1" fill="#0c0c0c"/><rect x="694.5" y="6.5" width="35" height="35" rx="4" fill="#bba56c" stroke="rgba(255,255,255,0.25)"/>
<path d="M712 24 L699.44 16.75 A14.5 14.5 0 0 1 724.56 16.75 Z" fill="#db4437"/>
<path d="M712 24 L724.56 16.75 A14.5 14.5 0 0 1 712.00 38.50 Z" fill="#f4c20d"/>
<path d="M712 24 L712.00 38.50 A14.5 14.5 0 0 1 699.44 16.75 Z" fill="#0f9d58"/>
<circle cx="712" cy="24" r="6.4" fill="#ffffff"/><circle cx="712" cy="24" r="5" fill="#4285f4"/>
<path d="M710 46 L712 44 L714 46 Z" fill="#e8e8e8"/>
<rect x="737.5" y="6.5" width="35" height="35" rx="4" fill="#5494cc" stroke="rgba(255,255,255,0.25)"/>
<path d="M742 12 L763 9 L765 36 L745 38 Z" fill="#1f2a3a"/>
<path d="M764 12 L769 14 V34 L765 36 Z" fill="#2a7fd4"/>
<path d="M762 13 L750 23 L746 20.5 M750 23 L762 31 M762.5 12.5 V31.5" fill="none" stroke="#3a9ae8" stroke-width="2.6"/><path d="M746 26 L750 23" stroke="#3a9ae8" stroke-width="2.4"/>
<path d="M752.5 0.3 L755.5 3.3 L758.5 0.3 Z" fill="#a8a8a8"/>
<path d="M753 46 L755 44 L757 46 Z" fill="#e8e8e8"/>
<rect x="982.5" y="6.5" width="35" height="35" rx="4" fill="url(#tg)" stroke="rgba(255,255,255,0.2)"/>
<path d="M989 12 H1011 L1009 38 H991 Z" fill="rgba(220,220,230,0.35)" stroke="#cfcfd8" stroke-width="0.8"/>
<ellipse cx="1000" cy="12" rx="11" ry="2.2" fill="#dcdce4"/>
<path d="M993 22 L998 19 L1004 21 L1008 20 L1007 36 L993 36 Z" fill="#ebebeb"/></svg></div>
</body></html>
